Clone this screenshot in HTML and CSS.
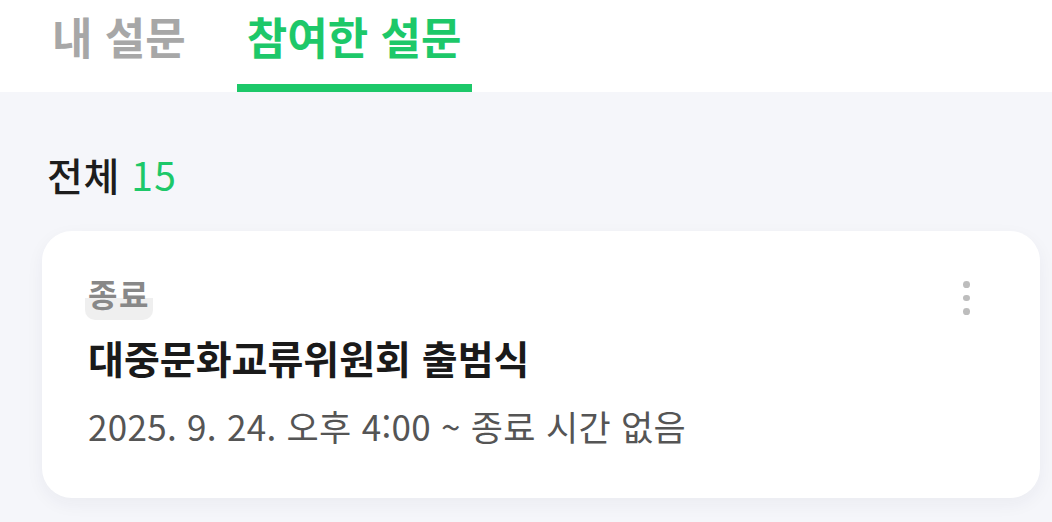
FILE: index.html
```
<!DOCTYPE html>
<html lang="ko">
<head>
<meta charset="utf-8">
<link rel="stylesheet" href="styles.css">
</head>
<body>
<header class="tabs">
  <div class="tab">내 설문</div>
  <div class="tab active">참여한 설문</div>
</header>
<main class="content">
  <h2 class="total">전체 <span class="count">15</span></h2>
  <article class="card">
    <div class="card-body">
      <span class="badge">종료</span>
      <h3 class="title">대중문화교류위원회 출범식</h3>
      <p class="date">2025. 9. 24. 오후 4:00 ~ 종료 시간 없음</p>
    </div>
    <button class="more" aria-label="더보기">
      <span class="dot"></span><span class="dot"></span><span class="dot"></span>
    </button>
  </article>
</main>
</body>
</html>
```
FILE: styles.css
```
* { box-sizing: border-box; }
html, body { margin: 0; padding: 0; }
body {
  width: 1052px;
  height: 522px;
  overflow: hidden;
  background: #f5f6fa;
  font-family: "Noto Sans CJK KR", "Noto Sans", sans-serif;
}
.tabs {
  display: flex;
  gap: 41px;
  padding: 0 0 0 42px;
  height: 92px;
  background: #ffffff;
}
.tab {
  padding: 0 10px;
  font-size: 44px;
  font-weight: 700;
  color: #a7a7a7;
  line-height: 72px;
  height: 92px;
  border-bottom: 8px solid transparent;
  white-space: nowrap;
}
.tab.active {
  color: #1dc869;
  border-bottom-color: #1dc869;
}
.content {
  padding: 0 12px 0 42px;
}
.total {
  margin: 0;
  padding: 57px 0 0 5px;
  font-size: 39px;
  font-weight: 500;
  color: #1d1d1d;
  line-height: 50px;
  height: 139px;
  letter-spacing: 0.5px;
}
.count {
  color: #1dc869;
  font-weight: 400;
  letter-spacing: 1.5px;
}
.card {
  display: flex;
  justify-content: space-between;
  background: #ffffff;
  border-radius: 30px;
  height: 267px;
  padding: 40px 70px 0 46px;
  box-shadow: 0 6px 18px rgba(30, 40, 70, 0.05);
}
.card-body {
  display: flex;
  flex-direction: column;
  align-items: flex-start;
}
.badge {
  font-size: 32px;
  font-weight: 700;
  color: #888888;
  line-height: 44px;
  margin-left: -3px;
  padding: 0 3px 5px;
  border-radius: 10px;
  letter-spacing: 1.5px;
  background: linear-gradient(to bottom, transparent 55%, #efefef 55%);
}
.title {
  margin: 9px 0 0;
  font-size: 39px;
  font-weight: 700;
  color: #1a1a1a;
  line-height: 56px;
}
.date {
  margin: 16px 0 0;
  font-size: 35px;
  font-weight: 400;
  color: #555555;
  line-height: 50px;
  letter-spacing: 0.3px;
}
.more {
  display: flex;
  flex-direction: column;
  gap: 7px;
  margin-top: 10px;
  padding: 0;
  border: 0;
  background: transparent;
  height: 34px;
}
.dot {
  width: 7px;
  height: 7px;
  border-radius: 50%;
  background: #bdbdbd;
}
```
